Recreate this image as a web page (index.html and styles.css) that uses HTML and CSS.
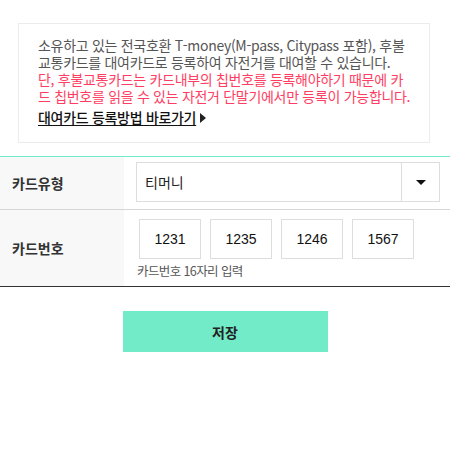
FILE: index.html
```html
<!DOCTYPE html>
<html lang="ko">
<head>
<meta charset="utf-8">
<link rel="stylesheet" href="styles.css">
</head>
<body>
<div class="page">
  <div class="notice">
    <p class="gray">소유하고 있는 전국호환 T-money(M-pass, Citypass 포함), 후불교통카드를 대여카드로 등록하여 자전거를 대여할 수 있습니다.</p>
    <p class="red">단, 후불교통카드는 카드내부의 칩번호를 등록해야하기 때문에 카드 칩번호를 읽을 수 있는 자전거 단말기에서만 등록이 가능합니다.</p>
    <a class="link" href="#"><span class="link-text">대여카드 등록방법 바로가기</span><span class="tri"></span></a>
  </div>
</div>
<div class="form">
  <div class="row row-type">
    <div class="label">카드유형</div>
    <div class="cell">
      <div class="select">
        <span class="select-value">티머니</span>
        <span class="select-arrow"><span class="caret"></span></span>
      </div>
    </div>
  </div>
  <div class="row row-num">
    <div class="label">카드번호</div>
    <div class="cell">
      <div class="inputs">
        <div class="num">1231</div>
        <div class="num">1235</div>
        <div class="num">1246</div>
        <div class="num">1567</div>
      </div>
      <div class="hint">카드번호 16자리 입력</div>
    </div>
  </div>
</div>
<div class="actions">
  <button class="save">저장</button>
</div>
</body>
</html>
```
FILE: styles.css
```css
* { box-sizing: border-box; }
body {
  margin: 0;
  font-family: "Noto Sans CJK KR", "Noto Sans", sans-serif;
  background: #fff;
  color: #333;
}
.page {
  padding: 23px 20px 0 18px;
}
.notice {
  border: 1px solid #ececec;
  padding: 13px 14px 16px 19px;
  font-size: 14px;
  line-height: 17px;
  word-break: break-all;
  letter-spacing: -0.3px;
}
.notice p { margin: 0; }
.gray { color: #555; }
.red { color: #ff3d62; }
.link {
  display: inline-flex;
  align-items: center;
  margin-top: 4px;
  color: #111;
  text-decoration: none;
}
.link-text {
  text-decoration: underline;
  text-underline-offset: 2px;
  font-weight: 500;
}
.tri {
  width: 0;
  height: 0;
  border-top: 5px solid transparent;
  border-bottom: 5px solid transparent;
  border-left: 6px solid #222;
  margin-left: 4px;
}
.form {
  margin-top: 13px;
  border-top: 1px solid #72ebc9;
  border-bottom: 1px solid #333;
}
.row {
  display: flex;
}
.row-type { border-bottom: 1px solid #d6d6d6; height: 53px; }
.row-num { height: 76px; }
.label {
  width: 124px;
  background: #f8f8f8;
  display: flex;
  align-items: center;
  padding-left: 12px;
  font-size: 14px;
  font-weight: 700;
  color: #333;
}
.cell { flex: 1; }
.row-type .cell { padding: 5px 10px 0 12px; }
.select {
  display: flex;
  height: 40px;
  border: 1px solid #ddd;
}
.select-value {
  flex: 1;
  display: flex;
  align-items: center;
  padding-left: 8px;
  font-size: 14px;
  color: #222;
}
.select-arrow {
  width: 38px;
  border-left: 1px solid #ddd;
  display: flex;
  align-items: center;
  justify-content: center;
}
.caret {
  width: 0; height: 0;
  border-left: 5px solid transparent;
  border-right: 5px solid transparent;
  border-top: 5px solid #111;
}
.row-num .cell { padding: 9px 0 0 15px; }
.inputs { display: flex; gap: 9px; }
.num {
  width: 62px;
  height: 40px;
  border: 1px solid #ddd;
  display: flex;
  align-items: center;
  justify-content: center;
  font-family: "Liberation Sans", Arial, sans-serif;
  font-size: 14px;
  color: #111;
}
.hint {
  margin-top: 2px;
  font-size: 12.5px;
  color: #555;
  letter-spacing: -0.6px;
  margin-left: -2px;
}
.actions {
  display: flex;
  justify-content: center;
  padding-top: 24px;
}
.save {
  width: 205px;
  height: 41px;
  border: 0;
  background: #72ebc9;
  font-family: "Noto Sans CJK KR", sans-serif;
  font-size: 14px;
  font-weight: 700;
  color: #222;
}
```
